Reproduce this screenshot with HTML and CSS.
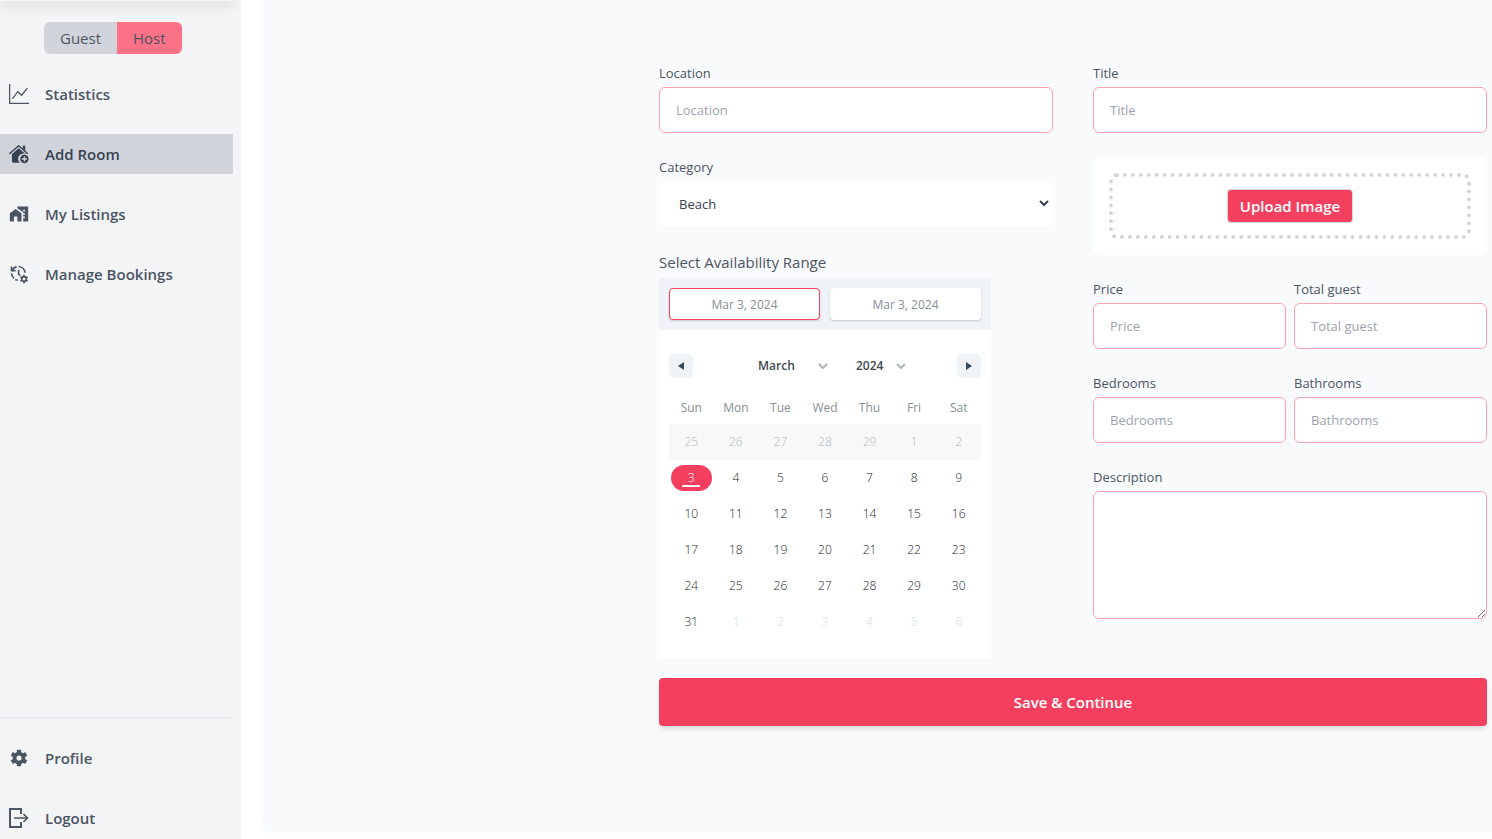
FILE: index.html
```html
<!DOCTYPE html>
<html lang="en">
<head>
    <meta charset="UTF-8">
    <meta name="viewport" content="width=device-width, initial-scale=1.0">
    <title>Add Room</title>
    <link rel="stylesheet" href="styles.css">
</head>
<body>
    <!-- Sidebar -->
    <aside class="sidebar">
        <div class="sidebar-top">
            <div class="logo-shadow"></div>
            <div class="role-toggle">
                <button type="button" class="role">Guest</button>
                <button type="button" class="role active">Host</button>
            </div>
            <nav class="menu">
                <a href="#" class="menu-item">
                    <svg class="icon" viewBox="0 0 16 16" fill="currentColor"><path fill-rule="evenodd" d="M0 0h1v15h15v1H0zm14.8 3.1a.5.5 0 0 1 .1.7l-4.5 5.5a.5.5 0 0 1-.74.04L7.06 6.7l-3.66 5.1a.5.5 0 0 1-.8-.6l4-5.5a.5.5 0 0 1 .76-.06l2.6 2.62 4.14-5.08a.5.5 0 0 1 .7-.08z"/></svg>
                    <span>Statistics</span>
                </a>
                <a href="#" class="menu-item active">
                    <svg class="icon" viewBox="0 0 24 24" fill="none" stroke="currentColor">
                        <path fill="currentColor" stroke="none" d="M11.500 5 3.500 12.400V20.500a2 2 0 0 0 2 2h7.700A6.200 6.200 0 0 1 20.500 12.500z"/>
                        <path stroke-width="1.600" stroke-linecap="round" stroke-linejoin="round" d="M1 11.500 11.500 2l10.500 9.500"/>
                        <path fill="currentColor" stroke="none" d="M16.500 2h3v6l-3-2.600z"/>
                        <circle cx="18.500" cy="18" r="5" fill="currentColor" stroke="none"/>
                        <path class="cutout" stroke-width="1.600" d="M18.500 15v6M15.500 18h6"/>
                    </svg>
                    <span>Add Room</span>
                </a>
                <a href="#" class="menu-item">
                    <svg class="icon" viewBox="0 0 24 24" fill="currentColor"><path d="M1 11v10h5v-6h4v6h5V11L8 6z"/><path d="M10 3v1.970l7 5V11h2v2h-2v2h2v2h-2v4h6V3H10zm9 6h-2V7h2v2z"/></svg>
                    <span>My Listings</span>
                </a>
                <a href="#" class="menu-item">
                    <svg class="icon" viewBox="0 0 24 24" fill="none" stroke="currentColor" stroke-width="2">
                        <path d="M3 3v5h5M3.700 7.500A8.500 8.500 0 0 1 9 3.200M11.500 3a8.500 8.500 0 0 1 7.800 7.500M3 11a8.500 8.500 0 0 0 3 6.300M7.500 18.500a8.500 8.500 0 0 0 3 1"/>
                        <path d="M11.500 7v5l2 2"/>
                        <circle cx="18" cy="18" r="2.800"/>
                        <path d="M18 13v2M18 21v2M13.700 15.500l1.700 1M20.600 19.500l1.700 1M13.700 20.500l1.700-1M20.600 16.500l1.700-1"/>
                    </svg>
                    <span>Manage Bookings</span>
                </a>
            </nav>
        </div>
        <div class="sidebar-bottom">
            <a href="#" class="menu-item">
                <svg class="icon" viewBox="0 0 24 24" fill="none" stroke="currentColor">
                    <circle cx="12" cy="12" r="5.300" stroke-width="4.500"/>
                    <path stroke-width="5" d="M12 2v4M12 18v4M3.300 7l3.500 2M17.200 15l3.500 2M3.300 17l3.500-2M17.200 9l3.500-2"/>
                </svg>
                <span>Profile</span>
            </a>
            <button type="button" class="menu-item">
                <svg class="icon" viewBox="0 0 20 20" fill="none" stroke="currentColor" stroke-width="2">
                    <path d="M12 6V1H1v18h11v-5"/>
                    <path d="M5 10h13M14.500 6l4 4-4 4" stroke-width="1.600"/>
                </svg>
                <span>Logout</span>
            </button>
        </div>
    </aside>

    <!-- Add room form -->
    <main class="content">
        <form class="room-form">
            <div class="columns">
                <div class="column">
                    <div class="field">
                        <label for="location">Location</label>
                        <input type="text" id="location" placeholder="Location">
                    </div>
                    <div class="field">
                        <label for="category">Category</label>
                        <select id="category">
                            <option>Beach</option>
                            <option>Mountain</option>
                            <option>Pool</option>
                        </select>
                    </div>
                    <div class="availability">
                        <p class="availability-title">Select Availability Range</p>
                        <div class="calendar">
                            <div class="date-display">
                                <input type="text" class="date-input active" aria-label="Start date" value="Mar 3, 2024" readonly>
                                <input type="text" class="date-input" aria-label="End date" value="Mar 3, 2024" readonly>
                            </div>
                            <div class="month-nav">
                                <button type="button" class="nav-btn" aria-label="Previous month"><svg viewBox="0 0 6 8"><path d="M6 0v8L0 4z"/></svg></button>
                                <div class="pickers">
                                    <div class="picker month">
                                        <select aria-label="Month">
                                            <option>March</option>
                                            <option>April</option>
                                        </select>
                                        <svg viewBox="0 0 10 6"><path d="M1 1l4 4 4-4"/></svg>
                                    </div>
                                    <div class="picker year">
                                        <select aria-label="Year">
                                            <option>2024</option>
                                            <option>2025</option>
                                        </select>
                                        <svg viewBox="0 0 10 6"><path d="M1 1l4 4 4-4"/></svg>
                                    </div>
                                </div>
                                <button type="button" class="nav-btn" aria-label="Next month"><svg viewBox="0 0 6 8"><path d="M0 0v8l6-4z"/></svg></button>
                            </div>
                            <table class="days">
                                <thead>
                                    <tr><th>Sun</th><th>Mon</th><th>Tue</th><th>Wed</th><th>Thu</th><th>Fri</th><th>Sat</th></tr>
                                </thead>
                                <tbody>
                                    <tr class="disabled"><td>25</td><td>26</td><td>27</td><td>28</td><td>29</td><td>1</td><td>2</td></tr>
                                    <tr><td><span class="selected">3</span></td><td>4</td><td>5</td><td>6</td><td>7</td><td>8</td><td>9</td></tr>
                                    <tr><td>10</td><td>11</td><td>12</td><td>13</td><td>14</td><td>15</td><td>16</td></tr>
                                    <tr><td>17</td><td>18</td><td>19</td><td>20</td><td>21</td><td>22</td><td>23</td></tr>
                                    <tr><td>24</td><td>25</td><td>26</td><td>27</td><td>28</td><td>29</td><td>30</td></tr>
                                    <tr><td>31</td><td class="passive">1</td><td class="passive">2</td><td class="passive">3</td><td class="passive">4</td><td class="passive">5</td><td class="passive">6</td></tr>
                                </tbody>
                            </table>
                        </div>
                    </div>
                </div>

                <div class="column">
                    <div class="field">
                        <label for="title">Title</label>
                        <input type="text" id="title" placeholder="Title">
                    </div>
                    <div class="upload">
                        <div class="upload-box">
                            <button type="button" class="upload-btn">Upload Image</button>
                        </div>
                    </div>
                    <div class="pair">
                        <div class="field">
                            <label for="price">Price</label>
                            <input type="text" id="price" placeholder="Price">
                        </div>
                        <div class="field">
                            <label for="guest">Total guest</label>
                            <input type="text" id="guest" placeholder="Total guest">
                        </div>
                    </div>
                    <div class="pair">
                        <div class="field">
                            <label for="bedrooms">Bedrooms</label>
                            <input type="text" id="bedrooms" placeholder="Bedrooms">
                        </div>
                        <div class="field">
                            <label for="bathrooms">Bathrooms</label>
                            <input type="text" id="bathrooms" placeholder="Bathrooms">
                        </div>
                    </div>
                    <div class="field">
                        <label for="description">Description</label>
                        <textarea id="description"></textarea>
                    </div>
                </div>
            </div>
            <button type="submit" class="save-btn">Save &amp; Continue</button>
        </form>
    </main>
</body>
</html>
```
FILE: styles.css
```css
* {
    box-sizing: border-box;
}
body {
    margin: 0;
    display: flex;
    min-height: 100vh;
    font-family: 'Segoe UI', 'Open Sans', 'Noto Sans', sans-serif;
    font-size: 15px;
    line-height: 24px;
    color: #4b5563;
    background: white;
}
button, input, select, textarea {
    font: inherit;
    color: inherit;
}
button {
    border: none;
    cursor: pointer;
}

/* Sidebar */
.sidebar {
    width: 241px;
    flex-shrink: 0;
    min-height: 100vh;
    padding: 0 8px 1px 0;
    display: flex;
    flex-direction: column;
    justify-content: space-between;
    background: #f3f4f6;
    overflow: hidden;
}
.logo-shadow {
    height: 1px;
    border-radius: 0 0 8px 8px;
    box-shadow: 0 2px 12px 1px rgba(0, 0, 0, 0.25);
}
.role-toggle {
    display: flex;
    width: max-content;
    margin: 21px 0 0 44px;
    border-radius: 6px;
    overflow: hidden;
}
.role {
    padding: 4px 16px;
    background: #d1d5db;
}
.role.active {
    background: #fb7185;
}
.menu-item {
    display: flex;
    align-items: center;
    gap: 16px;
    width: 100%;
    margin: 20px 0;
    padding: 8px 9px;
    font-weight: 600;
    color: #4b5563;
    background: none;
    text-decoration: none;
}
.menu-item.active {
    background: #d1d5db;
    color: #374151;
}
.icon {
    width: 20px;
    height: 20px;
}
.cutout {
    stroke: #d1d5db;
}
.sidebar-bottom {
    border-top: 1px solid #e5e7eb;
}
.sidebar-bottom .menu-item:last-child {
    margin-bottom: 0;
}

/* Main panel */
.content {
    flex: 1;
    display: flex;
    justify-content: flex-end;
    align-items: flex-start;
    margin: 0 0 6px 20px;
    padding: 63px 5px 0 20px;
    background: #f9fafb;
    border-bottom-left-radius: 12px;
}
.room-form {
    width: 100%;
    max-width: 828px;
    color: #4b5563;
}
.columns {
    display: grid;
    grid-template-columns: 1fr 1fr;
    gap: 40px;
}
.column {
    display: flex;
    flex-direction: column;
    gap: 24px;
}
.field {
    display: flex;
    flex-direction: column;
    gap: 4px;
    min-width: 0;
    font-size: 13px;
    line-height: 20px;
}
.field input, .field select, .field textarea {
    width: 100%;
    height: 46px;
    padding: 12px 16px;
    border: 1px solid #fda4af;
    border-radius: 6px;
    background: white;
    color: #1f2937;
}
.field select {
    height: 45px;
    padding: 12px 15px;
    border-color: white;
    color: #374151;
}
.field textarea {
    height: 128px;
}
.field ::placeholder {
    color: #9ca3af;
}
.pair {
    display: grid;
    grid-template-columns: 1fr 1fr;
    gap: 8px;
}

/* Upload */
.upload {
    padding: 16px;
    border-radius: 8px;
    background: white;
}
.upload-box {
    display: flex;
    justify-content: center;
    padding: 12px;
    border: 4px dotted #d1d5db;
    border-radius: 8px;
}
.upload-btn {
    padding: 4px 12px;
    border: 1px solid #d1d5db;
    border-radius: 4px;
    background: #f43f5e;
    color: white;
    font-weight: 600;
}

/* Calendar */
.availability-title {
    margin: 0 0 4px;
}
.calendar {
    width: 332px;
    max-width: 100%;
    padding-bottom: 18px;
    background: white;
    font-size: 12px;
}
.date-display {
    display: flex;
    gap: 10px;
    padding: 10px;
    background: #eff2f7;
}
.date-input {
    flex: 1;
    min-width: 0;
    height: 32px;
    border: 1px solid white;
    border-radius: 4px;
    background: white;
    box-shadow: 0 1px 2px rgba(35, 57, 66, 0.21);
    color: #849095;
    text-align: center;
}
.date-input.active {
    border-color: #f43f5e;
}
.month-nav {
    display: flex;
    justify-content: space-between;
    align-items: center;
    padding: 24px 10px 14px;
}
.nav-btn {
    display: flex;
    align-items: center;
    justify-content: center;
    width: 24px;
    height: 24px;
    padding: 0;
    border-radius: 5px;
    background: #eff2f7;
}
.nav-btn svg {
    width: 6px;
    height: 8px;
    fill: #34495e;
}
.pickers {
    display: flex;
    gap: 10px;
    padding-left: 12px;
    font-weight: 600;
    color: #3e484f;
}
.picker {
    display: flex;
    align-items: center;
    padding: 0 8px 0 10px;
}
.picker select {
    flex: 1;
    padding: 0;
    border: none;
    background: none;
    appearance: none;
}
.picker svg {
    width: 10px;
    height: 6px;
    fill: none;
    stroke: #aeb4bb;
    stroke-width: 2;
}
.picker.month {
    width: 88px;
}
.picker.year {
    width: 68px;
}
.days {
    width: 312px;
    margin: 0 auto;
    border-collapse: collapse;
    table-layout: fixed;
    text-align: center;
}
.days th {
    height: 32px;
    padding: 0;
    font-weight: 400;
    color: #849095;
}
.days td {
    height: 36px;
    padding: 0;
    font-weight: 300;
    color: #1d2429;
}
.days .disabled {
    background: #f8f8f8;
}
.days .disabled td {
    color: #aeb9bf;
}
.days .passive {
    color: #d5dce0;
}
.selected {
    display: block;
    height: 26px;
    margin: 0 2px;
    border-radius: 13px;
    background: #f43f5e;
    color: white;
    line-height: 26px;
}
.selected::after {
    content: '';
    display: block;
    width: 18px;
    height: 2px;
    margin: -6px auto 0;
    border-radius: 2px;
    background: white;
}

.save-btn {
    width: 100%;
    margin-top: 20px;
    padding: 12px;
    border-radius: 4px;
    background: #f43f5e;
    color: white;
    font-weight: 600;
    box-shadow: 0 4px 6px -1px rgba(0, 0, 0, 0.1), 0 2px 4px -2px rgba(0, 0, 0, 0.1);
}
```
